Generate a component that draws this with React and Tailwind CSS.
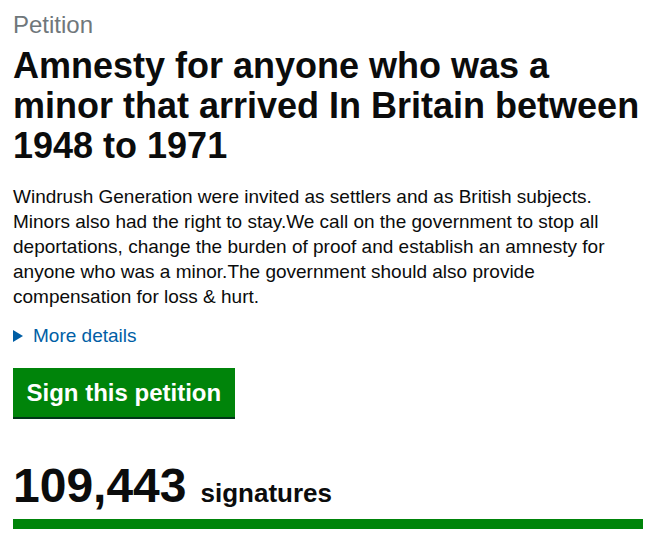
import React from 'react';

const PetitionSummary = ({ count, progress }) => (
  <div className="bg-white min-h-screen px-[13px] pt-[10px] text-[#0b0c0c] font-['Liberation_Sans',Arial,sans-serif]">
    <span className="block text-[24px] leading-[30px] text-[#6f777b]">Petition</span>
    <h1 className="mt-[6px] text-[36px] leading-[40px] font-bold">
      Amnesty for anyone who was a minor that arrived In Britain between 1948 to 1971
    </h1>

    <p className="mt-[18px] text-[19px] leading-[25px]">
      Windrush Generation were invited as settlers and as British subjects. Minors also had the right to stay.We call on the government to stop all deportations, change the burden of proof and establish an amnesty for anyone who was a minor.The government should also provide compensation for loss &amp; hurt.
    </p>

    <div className="mt-[14px] flex items-center gap-[10px] text-[19px] leading-[25px] text-[#005ea5]">
      <svg width="10" height="12" viewBox="0 0 10 12" className="shrink-0">
        <path d="M0 0 L10 6 L0 12 Z" fill="#005ea5" />
      </svg>
      <span>More details</span>
    </div>

    <button className="mt-[20px] px-[13.5px] h-[49px] bg-[#00840a] text-white text-[24px] font-bold shadow-[0_2px_0_#003618]">
      Sign this petition
    </button>

    <div className="mt-[45px] flex items-baseline gap-[14px]">
      <span className="text-[48px] leading-[48px] font-bold">{count}</span>
      <span className="text-[26px] font-bold">signatures</span>
    </div>
    <div className="mt-[6px] w-[630px] h-[10px] bg-[#dee0e2]">
      <div className="h-full bg-[#00840a]" style={{ width: `${progress}%` }} />
    </div>
  </div>
);

export default function App() {
  return <PetitionSummary count="109,443" progress={100} />;
}
